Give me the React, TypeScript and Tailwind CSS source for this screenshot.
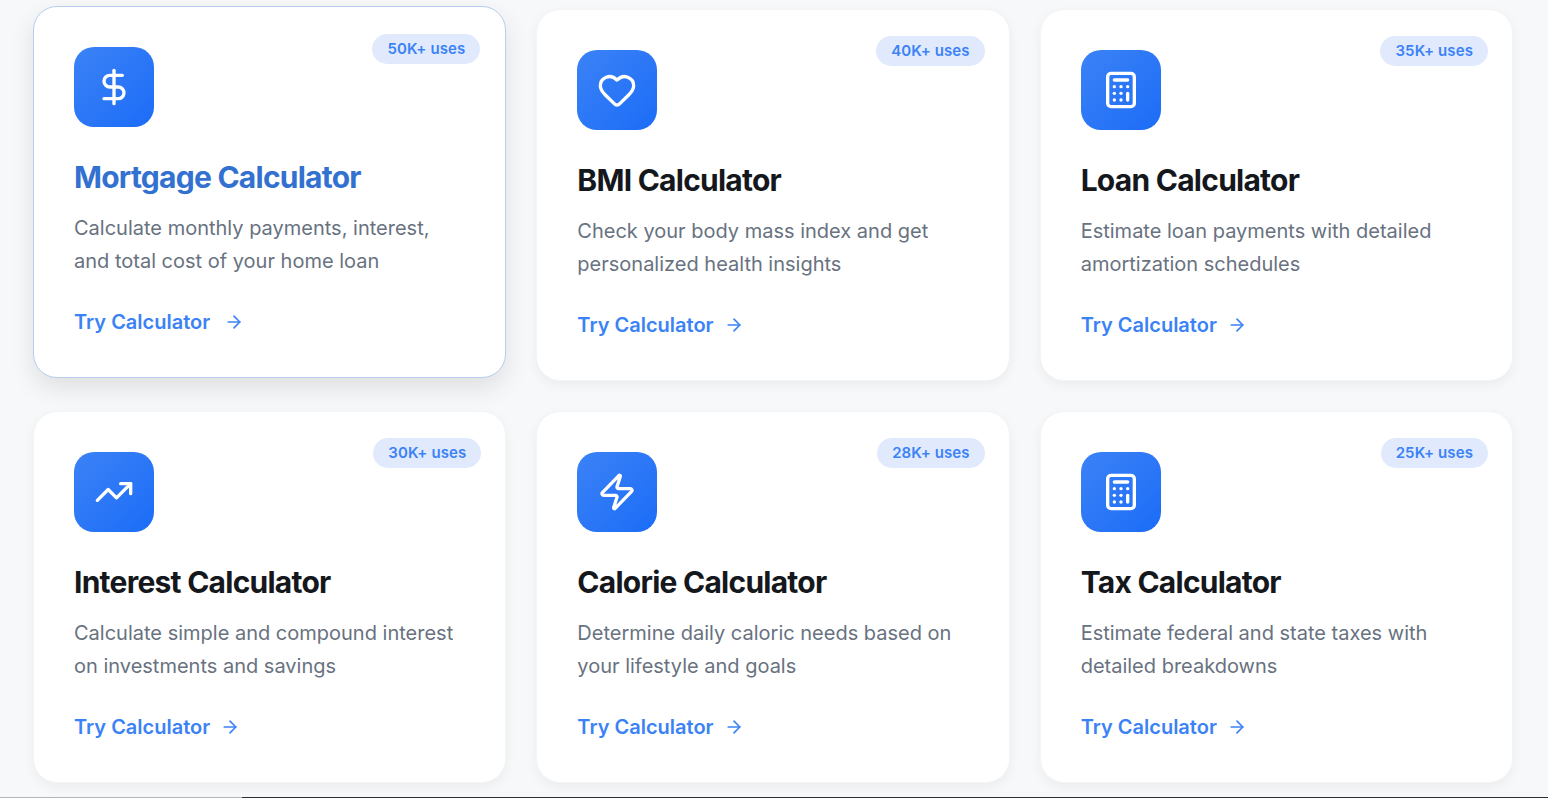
import { ArrowRight, Calculator, DollarSign, Heart, TrendingUp, Zap, type LucideIcon } from 'lucide-react';
import clsx from 'clsx';

interface Tool {
  title: string;
  lines: string[];
  uses: string;
  icon: LucideIcon;
  active?: boolean;
}

const TOOLS: Tool[] = [
  {
    title: 'Mortgage Calculator',
    lines: ['Calculate monthly payments, interest,', 'and total cost of your home loan'],
    uses: '50K+ uses',
    icon: DollarSign,
    active: true,
  },
  {
    title: 'BMI Calculator',
    lines: ['Check your body mass index and get', 'personalized health insights'],
    uses: '40K+ uses',
    icon: Heart,
  },
  {
    title: 'Loan Calculator',
    lines: ['Estimate loan payments with detailed', 'amortization schedules'],
    uses: '35K+ uses',
    icon: Calculator,
  },
  {
    title: 'Interest Calculator',
    lines: ['Calculate simple and compound interest', 'on investments and savings'],
    uses: '30K+ uses',
    icon: TrendingUp,
  },
  {
    title: 'Calorie Calculator',
    lines: ['Determine daily caloric needs based on', 'your lifestyle and goals'],
    uses: '28K+ uses',
    icon: Zap,
  },
  {
    title: 'Tax Calculator',
    lines: ['Estimate federal and state taxes with', 'detailed breakdowns'],
    uses: '25K+ uses',
    icon: Calculator,
  },
];

function ToolCard({ tool }: { tool: Tool }) {
  const Icon = tool.icon;
  return (
    <div
      className={clsx(
        'relative h-[372px] rounded-[24px] border bg-white p-[40px]',
        tool.active
          ? '-translate-y-[3px] border-[#b9cdf0] shadow-[0_10px_25px_rgba(0,0,0,0.1)]'
          : 'border-[#f3f4f6] shadow-[0_4px_12px_rgba(0,0,0,0.05)]',
      )}
    >
      <span
        className={clsx(
          'absolute flex h-[30px] items-center rounded-full bg-[#e1eafd] px-[15px] text-[15px] font-semibold tracking-[0.1px] text-[#3b82f6]',
          tool.active ? 'top-[27px] right-[25px]' : 'top-[26px] right-[24px]',
        )}
      >
        {tool.uses}
      </span>
      <div className="flex h-[80px] w-[80px] items-center justify-center rounded-[20px] bg-gradient-to-br from-[#3b82f6] to-[#1a6cf7] text-white">
        <Icon size={40} strokeWidth={2} />
      </div>
      <h3
        className={clsx(
          'mt-[30px] text-[30px] leading-[40px] font-bold tracking-[-0.75px]',
          tool.active ? 'text-[#3371d0]' : 'text-[#14171c]',
        )}
      >
        {tool.title}
      </h3>
      <p className="mt-[15px] text-[20px] leading-[33px] text-[#687280]">
        {tool.lines.map(line => (
          <span key={line} className="block whitespace-nowrap">
            {line}
          </span>
        ))}
      </p>
      <div className="mt-[29px] flex items-center gap-[10px] text-[20px] leading-[30px] font-semibold text-[#3b82f6]">
        Try Calculator
        <ArrowRight size={20} strokeWidth={2} className={clsx(tool.active && 'translate-x-[4px]')} />
      </div>
    </div>
  );
}

export default function App() {
  return (
    <div className="flex h-[798px] w-[1548px] flex-col overflow-hidden bg-[#f6f8fa] font-['Inter',sans-serif]">
      <div className="flex-1 px-[33px] pt-[9px]">
        <div className="grid w-[1480px] grid-cols-3 gap-[30px]">
          {TOOLS.map(tool => (
            <ToolCard key={tool.title} tool={tool} />
          ))}
        </div>
      </div>
      <div className="flex h-[1px]">
        <div className="w-[242px] bg-[#b4b5b8]" />
        <div className="flex-1 bg-[#2b2f36]" />
      </div>
    </div>
  );
}
